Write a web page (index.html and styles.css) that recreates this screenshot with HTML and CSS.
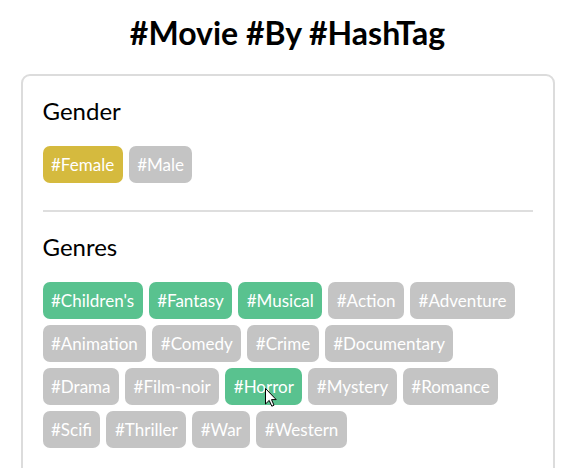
FILE: index.html
```html
<!DOCTYPE html>
<html>
<head>
<meta charset="utf-8">
<link rel="stylesheet" href="styles.css">
</head>
<body>
<div class="page">
  <h1 class="title">#Movie #By #HashTag</h1>
  <div class="card">
    <section class="group">
      <h2 class="group-title">Gender</h2>
      <div class="tags">
        <span class="tag tag-yellow">#Female</span>
        <span class="tag">#Male</span>
      </div>
    </section>
    <hr class="divider">
    <section class="group">
      <h2 class="group-title">Genres</h2>
      <div class="tags">
        <span class="tag tag-green">#Children's</span>
        <span class="tag tag-green">#Fantasy</span>
        <span class="tag tag-green">#Musical</span>
        <span class="tag">#Action</span>
        <span class="tag">#Adventure</span>
        <span class="tag">#Animation</span>
        <span class="tag">#Comedy</span>
        <span class="tag">#Crime</span>
        <span class="tag">#Documentary</span>
        <span class="tag">#Drama</span>
        <span class="tag">#Film-noir</span>
        <span class="tag tag-green tag-hover">#Horror<svg class="cursor" width="12" height="19" viewBox="0 0 12 19"><path d="M0.5 0.5 L0.5 16 L4.2 12.4 L6.8 18.2 L9 17.2 L6.5 11.6 L11.2 11.6 Z" fill="#fff" stroke="#000" stroke-width="1" stroke-linejoin="miter"/></svg></span>
        <span class="tag">#Mystery</span>
        <span class="tag">#Romance</span>
        <span class="tag">#Scifi</span>
        <span class="tag">#Thriller</span>
        <span class="tag">#War</span>
        <span class="tag">#Western</span>
      </div>
    </section>
  </div>
</div>
</body>
</html>
```

FILE: styles.css
```css
* { box-sizing: border-box; }
html, body {
  margin: 0;
  padding: 0;
  background: #fff;
  font-family: Lato, "Open Sans", sans-serif;
  color: #111;
}
.page {
  width: 575px;
  height: 468px;
  overflow: hidden;
  display: flex;
  flex-direction: column;
  align-items: center;
}
.title {
  margin: 14px 0 0;
  font-size: 32px;
  font-weight: 700;
  line-height: 1.2;
  color: #000;
}
.card {
  margin-top: 22px;
  width: 534px;
  border: 2px solid #dcdcdc;
  border-radius: 9px;
  padding: 21px 20px 40px;
  flex-shrink: 0;
}
.group-title {
  margin: 0 0 20px;
  font-size: 24px;
  font-weight: 400;
  line-height: 1.2;
  color: #000;
}
.tags {
  display: flex;
  flex-wrap: wrap;
  margin-bottom: -6px;
}
.tag {
  position: relative;
  display: inline-block;
  margin: 0 6px 6px 0;
  background: #c4c4c4;
  color: #fff;
  font-size: 17px;
  line-height: 19px;
  padding: 9px 8.5px;
  border-radius: 7px;
  white-space: nowrap;
}
.tag-yellow { background: #d5ba3e; }
.tag-green { background: #59c28f; }
.cursor {
  position: absolute;
  left: 40px;
  top: 20px;
}
.divider {
  border: 0;
  height: 2px;
  background: #dedede;
  margin: 27px 0 21px;
}
```
